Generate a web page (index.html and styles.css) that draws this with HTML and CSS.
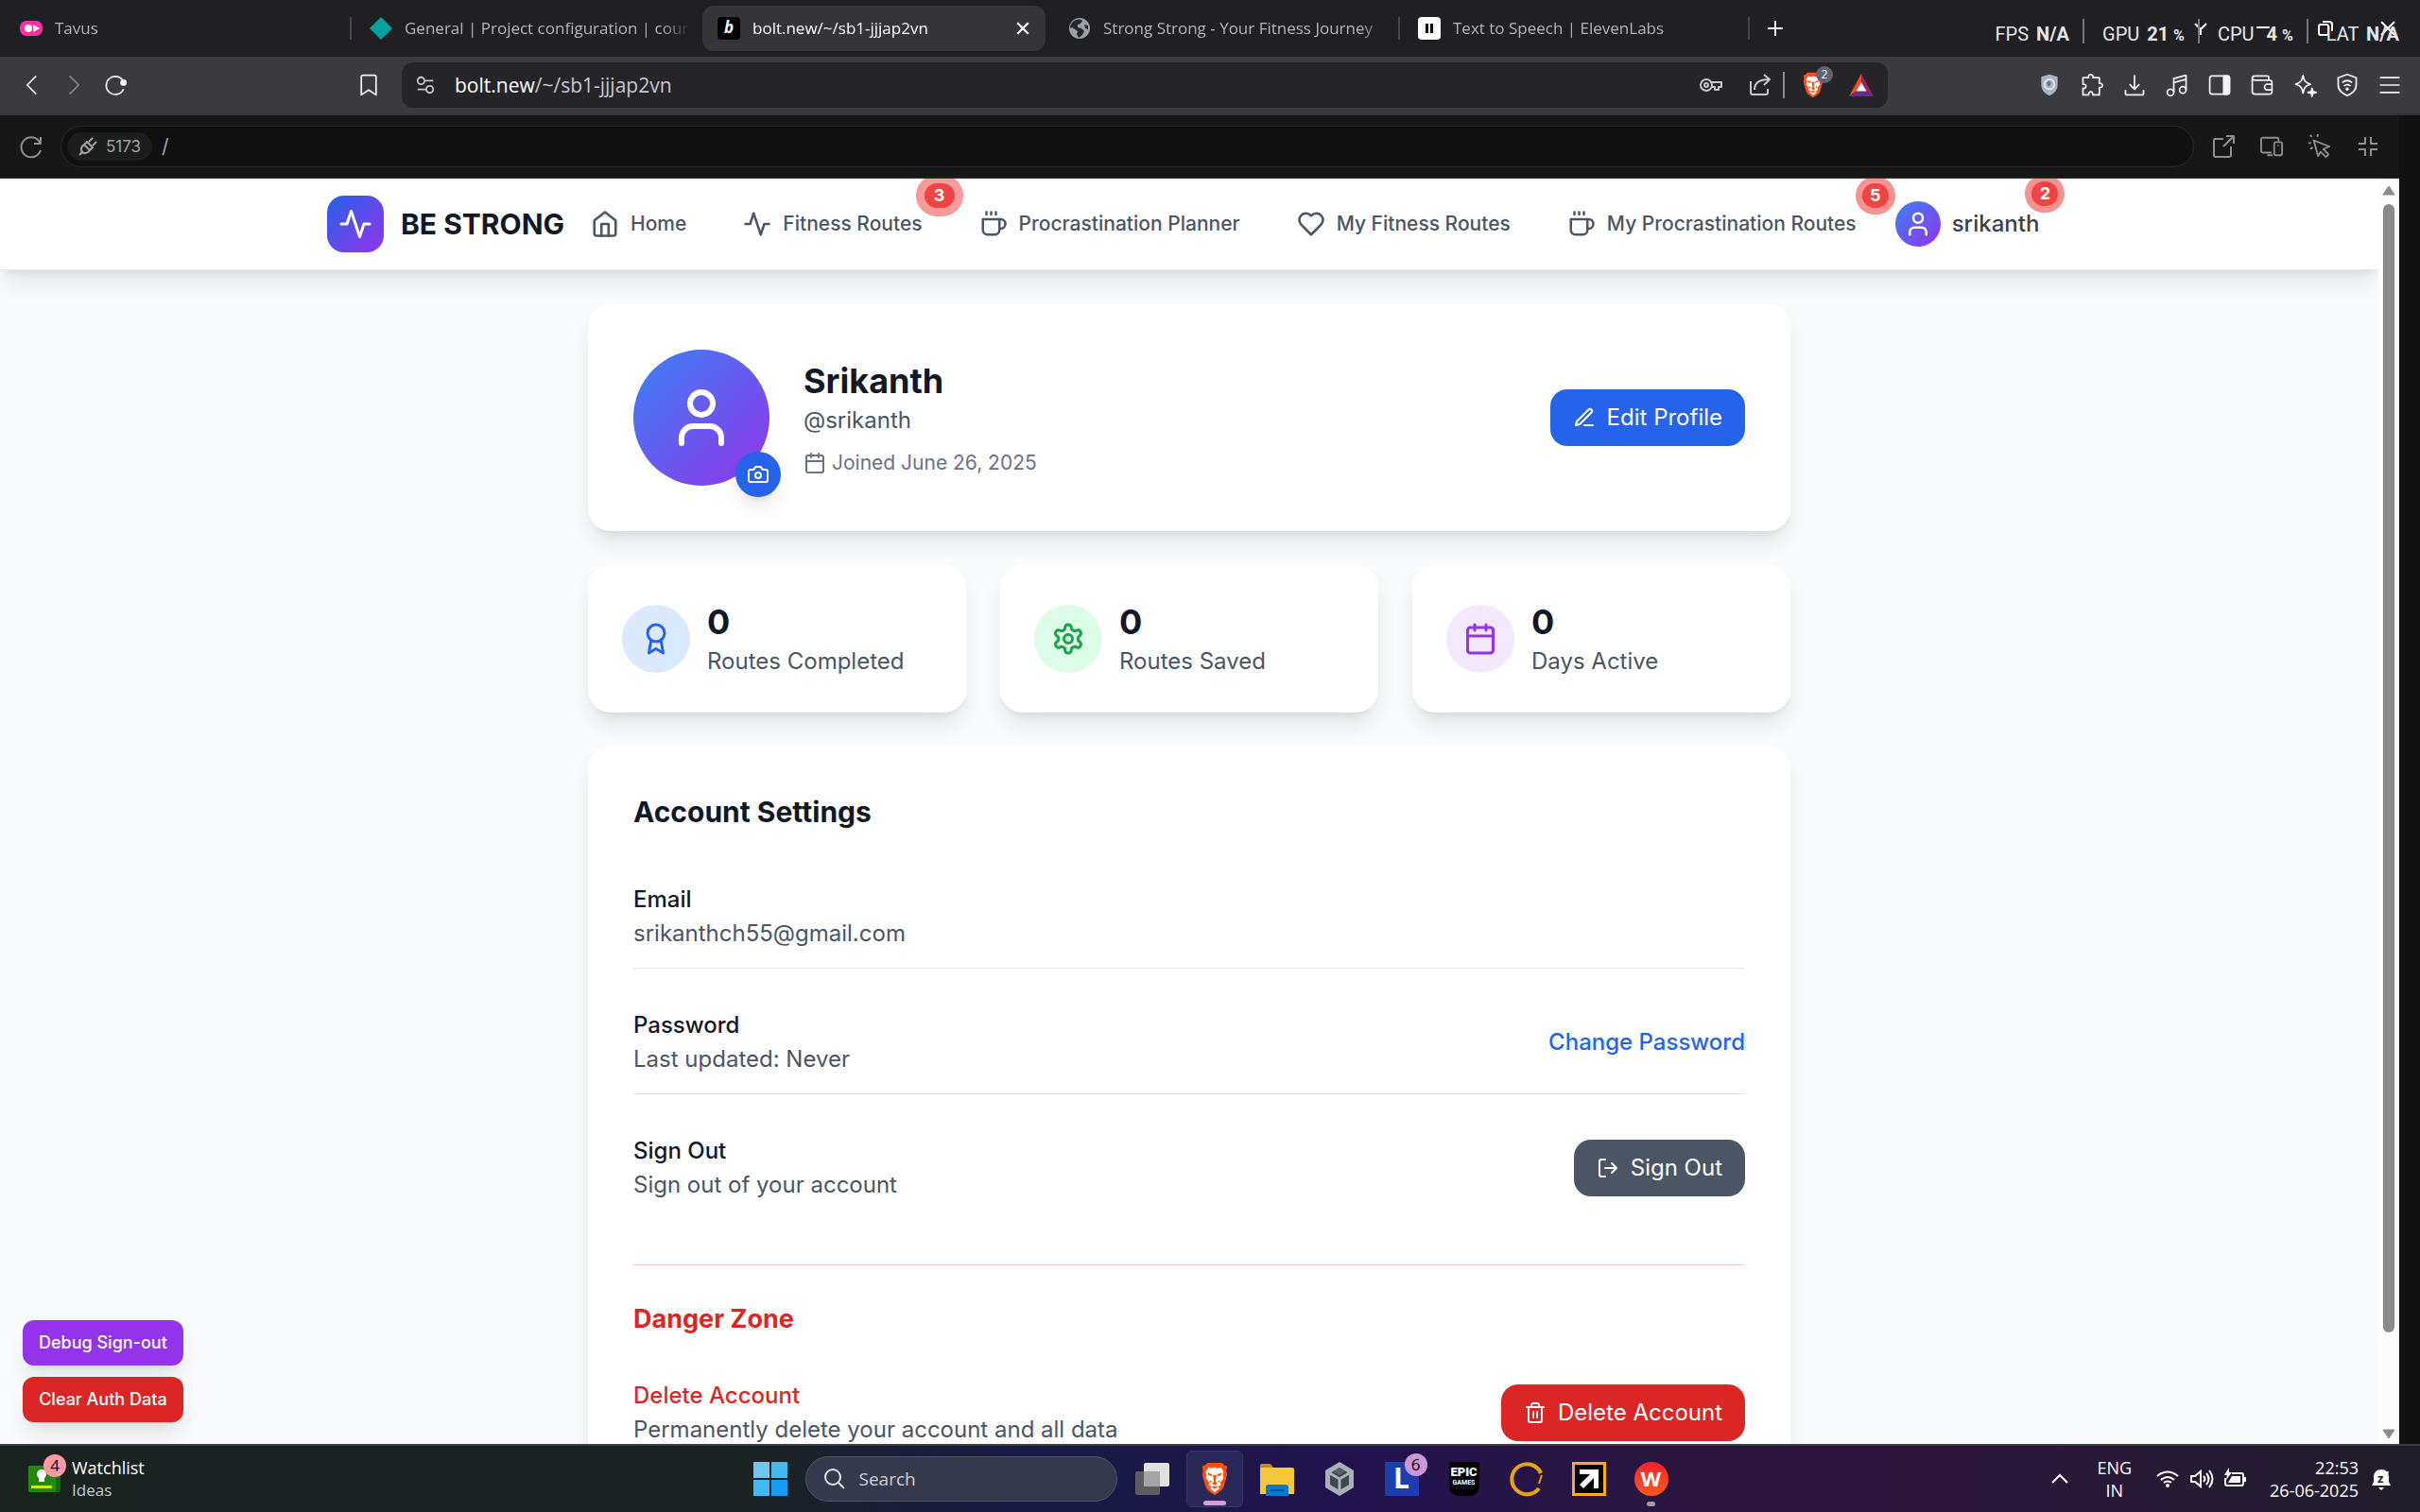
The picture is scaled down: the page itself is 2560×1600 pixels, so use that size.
FILE: index.html
```html
<!DOCTYPE html>
<html lang="en">

<head>
    <meta charset="UTF-8">
    <meta name="viewport" content="width=device-width, initial-scale=1.0">
    <title>Be Strong - Profile</title>
    <link rel="stylesheet" href="styles.css">
</head>

<body>
    <!-- shared icons -->
    <svg class="sprite" aria-hidden="true">
        <symbol id="i-home" viewBox="0 0 24 24"><path d="m3 9 9-7 9 7v11a2 2 0 0 1-2 2H5a2 2 0 0 1-2-2z"/><path d="M9 22V12h6v10"/></symbol>
        <symbol id="i-activity" viewBox="0 0 24 24"><path d="M22 12h-4l-3 9L9 3l-3 9H2"/></symbol>
        <symbol id="i-coffee" viewBox="0 0 24 24"><path d="M17 8h1a4 4 0 1 1 0 8h-1"/><path d="M3 8h14v9a4 4 0 0 1-4 4H7a4 4 0 0 1-4-4Z"/><path d="M6 2v2M10 2v2M14 2v2"/></symbol>
        <symbol id="i-heart" viewBox="0 0 24 24"><path d="M19 14c1.49-1.46 3-3.21 3-5.5A5.5 5.5 0 0 0 16.5 3c-1.76 0-3 .5-4.5 2-1.5-1.5-2.74-2-4.5-2A5.5 5.5 0 0 0 2 8.5c0 2.3 1.5 4.05 3 5.5l7 7Z"/></symbol>
        <symbol id="i-user" viewBox="0 0 24 24"><path d="M19 21v-2a4 4 0 0 0-4-4H9a4 4 0 0 0-4 4v2"/><circle cx="12" cy="7" r="4"/></symbol>
        <symbol id="i-calendar" viewBox="0 0 24 24"><rect x="3" y="4" width="18" height="18" rx="2"/><path d="M16 2v4M8 2v4M3 10h18"/></symbol>
        <symbol id="i-brave" viewBox="0 0 32 38">
            <path fill="#fb4f12" stroke="none" d="M8 1h16l3 3 3 1-1 5 1 4-4 14c-1 3-5 6-10 9-5-3-9-6-10-9L2 14l1-4-1-5 3-1z"/>
            <path fill="#fff" stroke="none" d="m9 6 4 1 3-1 3 1 4-1 3 5-1 4 1 3-4 5 1 3-3 1 1 3-5 4-5-4 1-3-3-1 1-3-4-5 1-3-1-4z"/>
            <path fill="#fb4f12" stroke="none" d="m8 12 5 2v2l-4-1zM24 12l-5 2v2l4-1zM14 14l2 1 2-1-1 8 2 2-3 2-3-2 2-2zM10 20l3 2-2 1zM22 20l-3 2 2 1zM12 28l4-1 4 1-4 2z"/>
        </symbol>
    </svg>

    <!-- browser tabs -->
    <header class="tabstrip">
        <div class="tab">
            <svg class="favicon" viewBox="0 0 24 24"><rect y="4" width="24" height="16" rx="7" fill="#fc2fa9"/><circle cx="9" cy="12" r="4" fill="#fff"/><path d="M14 8l7 4-7 4z" fill="#fff"/></svg>
            <span class="tab-title">Tavus</span>
        </div>
        <div class="tab divided">
            <svg class="favicon" viewBox="0 0 24 24"><path d="M12 0l12 12-12 12L0 12z" fill="#05a3a0"/></svg>
            <span class="tab-title">General | Project configuration | cour</span>
        </div>
        <div class="tab active">
            <span class="favicon bolt">b</span>
            <span class="tab-title">bolt.new/~/sb1-jjjap2vn</span>
            <button class="tab-close" aria-label="Close tab"><svg class="stroke" viewBox="0 0 14 14"><path d="M2 2l10 10M12 2L2 12"/></svg></button>
        </div>
        <div class="tab">
            <svg class="favicon" viewBox="0 0 24 24"><circle cx="12" cy="12" r="11" fill="#9aa0a6"/><path d="M6 4c4-2 8-2 9 0l-2 3-3 1v3l4 1 3 3-2 4-4 3-2-4 1-3-6-4-2 1c0-3 1-6 4-8zM17 8l4 1v4l-3-1z" fill="#27272b"/></svg>
            <span class="tab-title">Strong Strong - Your Fitness Journey</span>
        </div>
        <div class="tab divided">
            <svg class="favicon" viewBox="0 0 24 24"><rect width="24" height="24" rx="4" fill="#fff"/><path d="M8 7h3v10H8zM13 7h3v10h-3z" fill="#000"/></svg>
            <span class="tab-title">Text to Speech | ElevenLabs</span>
        </div>
        <button class="new-tab" aria-label="New tab"><svg class="stroke" viewBox="0 0 18 18"><path d="M9 1v16M1 9h16"/></svg></button>
        <div class="window-controls">
            <svg class="stroke" viewBox="0 0 18 18"><path d="M3 4l6 6 6-6M9 10v6"/></svg>
            <svg class="stroke" viewBox="0 0 18 18"><path d="M2 8h14"/></svg>
            <svg class="stroke" viewBox="0 0 18 18"><rect x="2" y="5" width="10" height="11" rx="2"/><path d="M6 2h7a3 3 0 0 1 3 3v7"/></svg>
            <svg class="stroke" viewBox="0 0 18 18"><path d="M2 2l14 14M16 2L2 16"/></svg>
        </div>
        <!-- performance overlay -->
        <div class="perf">
            <span class="perf-item">FPS <b>N/A</b></span>
            <span class="perf-item">GPU <b>21 <small>%</small></b></span>
            <span class="perf-item">CPU <b>&nbsp;4 <small>%</small></b></span>
            <span class="perf-item">LAT <b>N/A</b></span>
        </div>
    </header>

    <!-- address bar -->
    <div class="toolbar">
        <button class="tool" aria-label="Back"><svg class="stroke" viewBox="0 0 30 30"><path d="M20 4L9 15l11 11"/></svg></button>
        <button class="tool dim" aria-label="Forward"><svg class="stroke" viewBox="0 0 30 30"><path d="M10 4l11 11-11 11"/></svg></button>
        <button class="tool" aria-label="Reload"><svg class="stroke" viewBox="0 0 30 30"><path d="M25 20a11 11 0 1 1 0-9"/><circle cx="25" cy="12" r="3" fill="currentColor"/></svg></button>
        <button class="tool bookmark" aria-label="Bookmark"><svg class="stroke" viewBox="0 0 30 30"><path d="M6 5q0-2 2-2h14q2 0 2 2v22l-9-6-9 6z"/></svg></button>
        <div class="address">
            <svg class="stroke site" viewBox="0 0 24 24"><circle cx="7" cy="7" r="4"/><path d="M12 7h9M3 17h9"/><circle cx="17" cy="17" r="4"/></svg>
            <span class="url"><b>bolt.new</b>/~/sb1-jjjap2vn</span>
            <svg class="stroke small" viewBox="0 0 24 24"><circle cx="7" cy="12" r="6"/><circle cx="7" cy="12" r="2"/><path d="M13 9h10v5h-3v3h-4v-3h-3"/></svg>
            <svg class="stroke small share" viewBox="0 0 24 24"><path d="M2 8v12q0 2 2 2h14q2 0 2-2v-4M6 17c0-7 4-11 15-11M16 1l6 5-6 6"/></svg>
            <span class="address-brave"><svg viewBox="0 0 32 38"><use href="#i-brave"/></svg><i>2</i></span>
            <svg class="bat" viewBox="0 0 28 26"><path d="M14 0L0 26l8-6 6-10z" fill="#ff4724"/><path d="M14 0v10l6 10 8 6z" fill="#9e1f63"/><path d="M0 26h28l-8-6H8z" fill="#662d91"/><path d="M14 10l6 10H8z" fill="#fff"/></svg>
        </div>
        <div class="extensions">
            <svg viewBox="0 0 30 30"><path d="M15 2l10 3v9c0 7-4 11-10 14C9 25 5 21 5 14V5z" fill="#a9b4c6"/><circle cx="15" cy="14" r="6" fill="#a9b4c6" stroke="#e4e8ef" stroke-width="2"/><path d="M12 12q3-3 5 0l-2 5q-3-1-3-5z" fill="#66758f"/></svg>
            <svg class="stroke" viewBox="0 0 30 30"><path d="M4 6h7c-2-5 7-5 5 0h8v7c5-1 5 6 0 5v9h-8c1-5-6-5-5 0H4v-8c5 1 5-6 0-5z"/></svg>
            <svg class="stroke" viewBox="0 0 30 30"><path d="M15 3v17M9 14l6 6 6-6M4 21v4q0 2 2 2h18q2 0 2-2v-4"/></svg>
            <svg class="stroke" viewBox="0 0 30 30"><circle cx="7" cy="24" r="4"/><circle cx="22" cy="21" r="4"/><path d="M11 24V7l15-4v18M11 12l15-4"/></svg>
            <svg class="stroke" viewBox="0 0 30 30"><rect x="3" y="4" width="24" height="22" rx="3"/><path d="M20 4h5q2 0 2 2v18q0 2-2 2h-5z" fill="currentColor"/></svg>
            <svg class="stroke" viewBox="0 0 30 30"><path d="M23 9V5q0-1-2-1H6Q3 4 3 7v16q0 3 3 3h18q3 0 3-3V12q0-3-3-3H6Q3 9 3 6M27 14h-7a4 4 0 0 0 0 7h7"/></svg>
            <svg class="stroke" viewBox="0 0 30 30"><path d="M13 3c1 7 3 9 9 11-6 2-8 4-9 11-1-7-3-9-9-11 6-2 8-4 9-11z"/><path d="M24 19l1 4 4 1-4 1-1 4-1-4-4-1 4-1z" fill="currentColor"/></svg>
            <svg class="stroke" viewBox="0 0 30 30"><path d="M15 2l11 4v9c0 7-5 10-11 13C9 25 4 22 4 15V6z"/><path d="M9 12q6-5 12 0M11 16q4-3 8 0"/><circle cx="15" cy="20" r="1"/></svg>
            <svg class="stroke" viewBox="0 0 30 30"><path d="M3 6h24M3 15h24M3 24h24"/></svg>
        </div>
    </div>

    <!-- preview bar -->
    <div class="preview-bar">
        <button class="preview-tool" aria-label="Reload preview"><svg class="stroke" viewBox="0 0 24 24"><path d="M22 16A10.500 10.500 0 1 1 20 6l2 3M22 2v7h-7"/></svg></button>
        <div class="preview-url">
            <span class="port"><svg class="stroke" viewBox="0 0 20 20"><path d="M1 19l4-4M6 8l6 6-2 2c-5 3-9-1-6-6zM12 14l3-3-6-6-3 3M11 5l4-4M15 9l4-4M9 5l6 6"/></svg>5173</span>
            <span>/</span>
        </div>
        <button class="preview-tool" aria-label="Open in new tab"><svg class="stroke" viewBox="0 0 24 24"><path d="M12 4H3q-1 0-1 1v16q0 2 2 2h14q2 0 2-2v-9M15 1h8v8M23 1L12 12"/></svg></button>
        <button class="preview-tool" aria-label="Devices"><svg class="stroke" viewBox="0 0 26 24"><path d="M13 19H3q-2 0-2-2V4q0-2 2-2h16q2 0 2 2v2M8 22h6"/><rect x="16" y="7" width="9" height="15" rx="2"/><path d="M20 11h1"/></svg></button>
        <button class="preview-tool" aria-label="Select element"><svg class="stroke" viewBox="0 0 26 24"><path d="M6 5l18 7-7 3 6 6-3 3-6-6-3 5zM10 1l1-3M4 1L2-1M3 8H0M5 13l-3 2"/></svg></button>
        <button class="preview-tool" aria-label="Exit full screen"><svg class="stroke" viewBox="0 0 24 24"><path d="M9 2v7H2M15 2v7h7M9 22v-7H2M15 22v-7h7"/></svg></button>
    </div>

    <div class="viewport">
        <div class="app">
            <header class="site-header">
                <div class="site-header-inner">
                    <a class="brand" href="#">
                        <span class="brand-mark"><svg class="icon" viewBox="0 0 24 24"><use href="#i-activity"/></svg></span>
                        BE STRONG
                    </a>
                    <nav class="site-nav">
                        <a href="#"><svg class="icon"><use href="#i-home"/></svg>Home</a>
                        <a href="#"><svg class="icon"><use href="#i-activity"/></svg>Fitness Routes<span class="badge wide">3</span></a>
                        <a href="#"><svg class="icon"><use href="#i-coffee"/></svg>Procrastination Planner</a>
                        <a href="#"><svg class="icon"><use href="#i-heart"/></svg>My Fitness Routes</a>
                        <a href="#"><svg class="icon"><use href="#i-coffee"/></svg>My Procrastination Routes<span class="badge">5</span></a>
                    </nav>
                    <button class="user-menu">
                        <span class="user-avatar"><svg class="icon"><use href="#i-user"/></svg></span>
                        srikanth
                        <span class="badge">2</span>
                    </button>
                </div>
            </header>

            <main class="profile-page">
                <section class="card profile">
                    <div class="avatar">
                        <svg class="icon"><use href="#i-user"/></svg>
                        <button class="avatar-edit" aria-label="Change photo"><svg class="icon" viewBox="0 0 24 24"><path d="M14.500 4h-5L7 7H4a2 2 0 0 0-2 2v9a2 2 0 0 0 2 2h16a2 2 0 0 0 2-2V9a2 2 0 0 0-2-2h-3l-2.500-3z"/><circle cx="12" cy="13" r="3"/></svg></button>
                    </div>
                    <div class="profile-info">
                        <h1>Srikanth</h1>
                        <p>@srikanth</p>
                        <p class="joined"><svg class="icon"><use href="#i-calendar"/></svg>Joined June 26, 2025</p>
                    </div>
                    <button class="btn blue"><svg class="icon" viewBox="0 0 24 24"><path d="M12 20h9"/><path d="M16.500 3.500a2.120 2.120 0 0 1 3 3L7 19l-4 1 1-4Z"/></svg>Edit Profile</button>
                </section>

                <section class="stats">
                    <div class="card stat">
                        <span class="stat-icon award"><svg class="icon" viewBox="0 0 24 24"><circle cx="12" cy="8" r="6"/><path d="M15.477 12.890 17 22l-5-3-5 3 1.523-9.110"/></svg></span>
                        <div>
                            <strong>0</strong>
                            <p>Routes Completed</p>
                        </div>
                    </div>
                    <div class="card stat">
                        <span class="stat-icon saved"><svg class="icon" viewBox="0 0 24 24"><path d="M12.220 2h-.44a2 2 0 0 0-2 2v.18a2 2 0 0 1-1 1.730l-.43.25a2 2 0 0 1-2 0l-.15-.08a2 2 0 0 0-2.730.73l-.22.38a2 2 0 0 0 .73 2.730l.15.1a2 2 0 0 1 1 1.720v.51a2 2 0 0 1-1 1.740l-.15.09a2 2 0 0 0-.73 2.730l.22.38a2 2 0 0 0 2.730.73l.15-.08a2 2 0 0 1 2 0l.43.25a2 2 0 0 1 1 1.730V20a2 2 0 0 0 2 2h.44a2 2 0 0 0 2-2v-.18a2 2 0 0 1 1-1.730l.43-.25a2 2 0 0 1 2 0l.15.08a2 2 0 0 0 2.730-.73l.22-.39a2 2 0 0 0-.73-2.730l-.15-.08a2 2 0 0 1-1-1.740v-.5a2 2 0 0 1 1-1.740l.15-.09a2 2 0 0 0 .73-2.730l-.22-.38a2 2 0 0 0-2.730-.73l-.15.08a2 2 0 0 1-2 0l-.43-.25a2 2 0 0 1-1-1.730V4a2 2 0 0 0-2-2z"/><circle cx="12" cy="12" r="3"/></svg></span>
                        <div>
                            <strong>0</strong>
                            <p>Routes Saved</p>
                        </div>
                    </div>
                    <div class="card stat">
                        <span class="stat-icon days"><svg class="icon"><use href="#i-calendar"/></svg></span>
                        <div>
                            <strong>0</strong>
                            <p>Days Active</p>
                        </div>
                    </div>
                </section>

                <section class="card settings">
                    <h2>Account Settings</h2>
                    <div class="setting">
                        <div>
                            <h3>Email</h3>
                            <p>srikanthch55@gmail.com</p>
                        </div>
                    </div>
                    <div class="setting">
                        <div>
                            <h3>Password</h3>
                            <p>Last updated: Never</p>
                        </div>
                        <a class="change-link" href="#">Change Password</a>
                    </div>
                    <div class="setting last">
                        <div>
                            <h3>Sign Out</h3>
                            <p>Sign out of your account</p>
                        </div>
                        <button class="btn gray"><svg class="icon" viewBox="0 0 24 24"><path d="M9 21H5a2 2 0 0 1-2-2V5a2 2 0 0 1 2-2h4"/><path d="m16 17 5-5-5-5M21 12H9"/></svg>Sign Out</button>
                    </div>
                    <div class="danger">
                        <h2>Danger Zone</h2>
                        <div class="setting last">
                            <div>
                                <h3>Delete Account</h3>
                                <p>Permanently delete your account and all data</p>
                            </div>
                            <button class="btn red"><svg class="icon" viewBox="0 0 24 24"><path d="M3 6h18M19 6v14c0 1-1 2-2 2H7c-1 0-2-1-2-2V6M8 6V4c0-1 1-2 2-2h4c1 0 2 1 2 2v2M10 11v6M14 11v6"/></svg>Delete Account</button>
                        </div>
                    </div>
                </section>
            </main>

            <div class="debug">
                <button class="purple">Debug Sign-out</button>
                <button class="red">Clear Auth Data</button>
            </div>
        </div>
        <div class="scrollbar">
            <svg viewBox="0 0 16 12"><path d="M8 1l6 9H2z"/></svg>
            <span class="thumb"></span>
            <svg viewBox="0 0 16 12"><path d="M8 11l6-9H2z"/></svg>
        </div>
    </div>

    <footer class="taskbar">
        <div class="widget">
            <span class="widget-icon">
                <svg viewBox="0 0 34 28"><rect width="34" height="28" rx="2" fill="#0d6b12"/><rect width="29" height="28" rx="2" fill="#22890f"/><circle cx="14" cy="9" r="5" fill="#fff"/><path d="M11 12h6v5h-6z" fill="#fff"/><path d="M3 21h22v3H3z" fill="#c8ee00"/></svg>
                <i>4</i>
            </span>
            <div>Watchlist<small>Ideas</small></div>
        </div>

        <div class="dock">
            <svg class="start" viewBox="0 0 36 36"><path d="M0 1q0-1 1-1h16v17H0z" fill="#6bc9ee"/><path d="M19 0h16q1 0 1 1v16H19z" fill="#45baf1"/><path d="M0 19h17v17H1q-1 0-1-1z" fill="#3cbbf5"/><path d="M19 19h17v16q0 1-1 1H19z" fill="#159cf5"/></svg>
            <div class="search">
                <svg viewBox="0 0 24 24"><circle cx="10" cy="10" r="8"/><path d="M16 16l6 6"/></svg>
                <input type="text" placeholder="Search" aria-label="Search">
            </div>
            <div class="dock-app"><svg viewBox="0 0 36 36"><rect y="10" width="26" height="25" rx="2" fill="#5c5c5e"/><rect x="9" y="1" width="27" height="25" rx="2" fill="#e2e2e2"/><path d="M9 10h17v16H9z" fill="#a5a5a7"/></svg></div>
            <div class="dock-app open"><svg viewBox="0 0 32 38"><use href="#i-brave"/></svg></div>
            <div class="dock-app"><svg viewBox="0 0 36 36"><path d="M0 4q0-2 2-2h9l3 4H0z" fill="#c98b08"/><path d="M0 6h34q2 0 2 2v26H0z" fill="#f5c73c"/><path d="M6 36V27q0-3 3-3h18q3 0 3 3v9z" fill="#0b77cf"/><path d="M11 29h14v2H11z" fill="#064f91"/></svg></div>
            <div class="dock-app"><svg viewBox="0 0 36 36"><path d="M18 0l15 9v18l-15 9-15-9V9z" fill="#a9b0b7"/><path d="M18 6l10 6v12l-10 6-10-6V12z" fill="#3e4650"/><path d="M18 6l6 4-6 4-6-4z" fill="#59626d"/><path d="M8 12l10 6 10-6M18 18v12" fill="none" stroke="#a9b0b7" stroke-width="3"/></svg></div>
            <div class="dock-app"><span class="l-app">L</span><i>6</i></div>
            <div class="dock-app"><span class="epic"><b>EPIC</b>GAMES</span></div>
            <div class="dock-app"><svg viewBox="0 0 36 36"><path d="M33 12A16 16 0 1 0 31 28" fill="none" stroke="#e8a500" stroke-width="4"/><path d="M34 14l-3 9" stroke="#e8a500" stroke-width="2"/></svg></div>
            <div class="dock-app"><svg viewBox="0 0 36 36"><rect width="36" height="36" fill="#fca820"/><rect x="3" y="3" width="30" height="30" fill="#000"/><path d="M8 8h20v20h-5V17L12 28l-4-4 11-11H8z" fill="#fff"/></svg></div>
            <div class="dock-app running"><span class="wps">W</span></div>
        </div>

        <div class="tray">
            <svg class="chevron" viewBox="0 0 18 12"><path d="M1 10l8-8 8 8"/></svg>
            <div class="lang">ENG<br>IN</div>
            <svg viewBox="0 0 24 24"><path d="M1 9q11-9 22 0M5 13q7-6 14 0M8 16q4-3 8 0"/><circle cx="12" cy="19" r="1" fill="#fff"/></svg>
            <svg viewBox="0 0 24 24"><path d="M1 9h4l6-5v16l-6-5H1zM14 9q3 3 0 6M17 6q5 6 0 12M20 3q7 9 0 18"/></svg>
            <svg viewBox="0 0 24 24"><path d="M8 6h10q2 0 2 2v9q0 2-2 2H3q-2 0-2-2v-6"/><path d="M8 9h9v7H4zM21 10h2v5h-2zM5 0L0 8h3l-1 5 6-8H5z" fill="#fff" stroke="none"/></svg>
            <div class="clock">22:53<br>26-06-2025</div>
            <span class="bell"><svg viewBox="0 0 24 24"><path d="M2 19l2-4V9q1-7 8-7t8 7v6l2 4zM9 21h6l-3 3z" fill="#fff" stroke="none"/></svg><b>z<sup>z</sup></b></span>
        </div>
    </footer>
</body>

</html>
```
FILE: styles.css
```css
* {
    box-sizing: border-box;
}

body {
    margin: 0;
    height: 100vh;
    display: flex;
    flex-direction: column;
    overflow: hidden;
    background: #111;
    font-family: Inter, "Liberation Sans", sans-serif;
    font-size: 24px;
    line-height: 36px;
}

h1,
h2,
h3,
p {
    margin: 0;
}

button {
    padding: 0;
    border: 0;
    background: none;
    color: inherit;
    font: inherit;
    cursor: pointer;
}

a {
    color: inherit;
    text-decoration: none;
}

svg {
    flex: none;
    overflow: visible;
}

i {
    font-style: normal;
}

.sprite {
    display: none;
}

.icon {
    width: 24px;
    height: 24px;
    fill: none;
    stroke: currentColor;
    stroke-width: 2;
    stroke-linecap: round;
    stroke-linejoin: round;
}

.stroke {
    fill: none;
    stroke: currentColor;
    stroke-width: 2;
    stroke-linejoin: round;
}

/* Browser tabs */

.tabstrip {
    position: relative;
    display: flex;
    align-items: center;
    height: 60px;
    flex: none;
    background: #201f24;
    color: #b5b4b8;
    font: 17px/24px "Open Sans", sans-serif;
}

.tab {
    display: flex;
    align-items: center;
    gap: 13px;
    flex: 0 1 370px;
    min-width: 0;
    height: 48px;
    padding: 0 10px 0 21px;
    border-radius: 12px;
}

.tab.divided {
    border-radius: 0;
    background: linear-gradient(#47464b, #47464b) left center / 2px 24px no-repeat;
}

.tab.active {
    flex-basis: 363px;
    margin: 0 3px;
    padding: 0 16px;
    background: #353438;
    color: #fff;
}

.favicon {
    width: 24px;
    height: 24px;
    flex: none;
}

.bolt {
    border-radius: 4px;
    background: #000;
    color: #fff;
    font-weight: 700;
    font-style: italic;
    text-align: center;
    line-height: 22px;
}

.tab-title {
    flex: 1;
    overflow: hidden;
    white-space: nowrap;
    -webkit-mask-image: linear-gradient(90deg, #000 90%, transparent);
    mask-image: linear-gradient(90deg, #000 90%, transparent);
}

.tab-close,
.tab-close svg {
    width: 16px;
    height: 16px;
    display: block;
}

.new-tab {
    width: 56px;
    height: 24px;
    border-left: 2px solid #47464b;
    color: #fff;
}

.new-tab svg {
    width: 18px;
    height: 18px;
    display: block;
    margin: auto;
}

.window-controls {
    display: flex;
    gap: 48px;
    margin-left: auto;
    padding-right: 25px;
    color: #fff;
}

.window-controls svg {
    width: 18px;
    height: 18px;
}

/* floats over the tab strip */
.perf {
    position: absolute;
    top: 20px;
    right: 22px;
    display: flex;
    color: #e6e6e6;
    font: 20px/32px Roboto, sans-serif;
    white-space: nowrap;
}

.perf-item + .perf-item {
    margin-left: 14px;
    padding-left: 19px;
    border-left: 2px solid #77767b;
    height: 26px;
}

.perf b {
    margin-left: 3px;
}

.perf small {
    font-size: 16px;
}

/* Address bar */

.toolbar {
    display: flex;
    align-items: center;
    height: 62px;
    flex: none;
    padding: 0 17px 0 21px;
    border-bottom: 2px solid #323135;
    background: #3b3a3f;
    color: #f2f2f4;
}

.tool {
    width: 44px;
    height: 26px;
    text-align: left;
}

.tool svg {
    width: 26px;
    height: 26px;
    display: block;
}

.dim {
    color: #858488;
}

.bookmark {
    margin-left: 224px;
    margin-right: 4px;
}

.address {
    display: flex;
    align-items: center;
    flex: 1;
    height: 48px;
    padding: 0 14px;
    border-radius: 12px;
    background: #252429;
    color: #c8c8ca;
    font: 21px/28px "Open Sans", sans-serif;
    max-width: 1572px;
}

.site {
    width: 22px;
    height: 22px;
    margin-right: 20px;
}

.url {
    flex: 1;
}

.url b {
    font-weight: 400;
    color: #fff;
}

.small {
    width: 24px;
    height: 24px;
    margin-right: 28px;
}

.share {
    margin-right: 12px;
}

.address-brave {
    position: relative;
    display: flex;
    padding-left: 18px;
    border-left: 2px solid #8c8b90;
    margin-right: 25px;
}

.address-brave svg {
    width: 24px;
    height: 28px;
}

.address-brave i {
    position: absolute;
    right: -9px;
    top: -6px;
    width: 18px;
    height: 18px;
    border-radius: 9px;
    background: #5e6474;
    color: #fff;
    font-size: 12px;
    line-height: 18px;
    text-align: center;
}

.bat {
    width: 28px;
    height: 24px;
}

.extensions {
    display: flex;
    gap: 19px;
    margin-left: auto;
    padding-right: 2px;
}

.extensions svg {
    width: 26px;
    height: 26px;
}

/* Preview bar */

.preview-bar {
    display: flex;
    align-items: center;
    gap: 27px;
    height: 67px;
    flex: none;
    margin-right: 22px;
    padding: 0 21px;
    border-bottom: 1px solid #333;
    background: #171717;
    color: #8f8f8f;
}

.preview-tool,
.preview-tool svg {
    width: 24px;
    height: 24px;
    display: block;
}

.preview-url {
    display: flex;
    align-items: center;
    gap: 10px;
    flex: 1;
    height: 44px;
    margin-left: -8px;
    margin-right: -8px;
    padding: 0 6px;
    border: 1px solid #292929;
    border-radius: 22px;
    background: #101010;
    color: #a3a3a3;
    font-size: 21px;
}

.port {
    display: flex;
    align-items: center;
    gap: 9px;
    height: 30px;
    padding: 0 12px;
    border-radius: 15px;
    background: #1d1d1d;
    font-size: 17px;
}

.port svg {
    width: 20px;
    height: 20px;
}

/* App */

.viewport {
    display: flex;
    flex: 1;
    min-height: 0;
    padding-right: 22px;
    overflow: hidden;
}

.app {
    position: relative;
    flex: 1;
    overflow: hidden;
    background: #f9fafb;
    color: #111827;
}

.site-header {
    position: relative;
    z-index: 1;
    border-bottom: 1px solid #e5e7eb;
    background: #fff;
    box-shadow: 0 15px 23px -5px rgba(0, 0, 0, 0.1), 0 6px 9px -6px rgba(0, 0, 0, 0.1);
}

.site-header-inner {
    display: flex;
    align-items: center;
    height: 96px;
    max-width: 1920px;
    margin: 0 auto;
    padding: 0 48px;
}

.brand {
    display: flex;
    align-items: center;
    gap: 18px;
    font-size: 30px;
    font-weight: 700;
    white-space: nowrap;
}

.brand-mark {
    display: flex;
    align-items: center;
    justify-content: center;
    width: 60px;
    height: 60px;
    border-radius: 18px;
    background: linear-gradient(135deg, #2563eb, #9333ea);
    color: #fff;
}

.brand-mark .icon {
    width: 36px;
    height: 36px;
}

.site-nav {
    display: flex;
    gap: 24px;
    margin-left: 10px;
}

.site-nav a {
    position: relative;
    display: flex;
    align-items: center;
    gap: 12px;
    padding: 12px 18px;
    color: #4b5563;
    font-size: 21px;
    font-weight: 500;
    line-height: 30px;
    white-space: nowrap;
}

.site-nav .icon,
.user-menu .icon {
    width: 30px;
    height: 30px;
}

.badge {
    position: absolute;
    top: -16px;
    right: -16px;
    width: 28px;
    height: 26px;
    border-radius: 14px;
    background: #ef4444;
    box-shadow: 0 0 0 7px #f69292;
    color: #fff;
    font-size: 18px;
    font-weight: 700;
    line-height: 26px;
    text-align: center;
}

.badge.wide {
    width: 32px;
    box-shadow: 0 0 0 9px #f79a9a;
}

.user-menu {
    position: relative;
    display: flex;
    align-items: center;
    gap: 12px;
    margin-left: 23px;
    padding-right: 4px;
    color: #374151;
    font-weight: 500;
}

.user-menu .badge {
    top: -21px;
}

.user-avatar {
    display: flex;
    align-items: center;
    justify-content: center;
    width: 48px;
    height: 48px;
    border-radius: 50%;
    background: linear-gradient(135deg, #3b82f6, #9333ea);
    color: #fff;
}

.profile-page {
    display: flex;
    flex-direction: column;
    gap: 36px;
    max-width: 1344px;
    margin: 0 auto;
    padding: 36px;
}

.card {
    border-radius: 24px;
    background: #fff;
    box-shadow: 0 15px 23px -5px rgba(0, 0, 0, 0.1), 0 6px 9px -6px rgba(0, 0, 0, 0.1);
}

.card p {
    color: #4b5563;
}

.profile {
    display: flex;
    align-items: center;
    gap: 36px;
    padding: 48px;
}

.avatar {
    position: relative;
    display: flex;
    align-items: center;
    justify-content: center;
    width: 144px;
    height: 144px;
    border-radius: 50%;
    background: linear-gradient(135deg, #3b82f6, #9333ea);
    color: #fff;
}

.avatar > .icon {
    width: 72px;
    height: 72px;
}

.avatar-edit {
    position: absolute;
    right: -12px;
    bottom: -12px;
    display: flex;
    align-items: center;
    justify-content: center;
    width: 48px;
    height: 48px;
    border-radius: 50%;
    background: #2563eb;
    box-shadow: 0 15px 23px -5px rgba(0, 0, 0, 0.1), 0 6px 9px -6px rgba(0, 0, 0, 0.1);
}

.profile-info {
    flex: 1;
}

.profile-info h1 {
    font-size: 36px;
    line-height: 48px;
}

.card .joined {
    display: flex;
    align-items: center;
    gap: 6px;
    margin-top: 12px;
    color: #6b7280;
    font-size: 21px;
    line-height: 30px;
}

.btn {
    display: flex;
    align-items: center;
    gap: 12px;
    height: 60px;
    padding: 0 24px;
    border-radius: 18px;
    color: #fff;
}

.blue {
    background: #2563eb;
}

.gray {
    background: #4b5563;
}

.red {
    background: #dc2626;
}

.purple {
    background: #9333ea;
}

.stats {
    display: grid;
    grid-template-columns: repeat(3, 1fr);
    gap: 36px;
}

.stat {
    display: flex;
    align-items: center;
    gap: 18px;
    padding: 36px;
}

.stat strong {
    display: block;
    font-size: 36px;
    line-height: 48px;
}

.stat-icon {
    display: flex;
    align-items: center;
    justify-content: center;
    width: 72px;
    height: 72px;
    border-radius: 50%;
}

.stat-icon .icon {
    width: 36px;
    height: 36px;
}

.award {
    background: #dbeafe;
    color: #2563eb;
}

.saved {
    background: #dcfce7;
    color: #16a34a;
}

.days {
    background: #f3e8ff;
    color: #9333ea;
}

.settings {
    padding: 48px;
}

.settings h2 {
    margin-bottom: 36px;
    font-size: 30px;
    line-height: 42px;
}

.setting {
    display: flex;
    align-items: center;
    justify-content: space-between;
    margin-bottom: 24px;
    padding: 18px 0;
    border-bottom: 1px solid #e5e7eb;
}

.setting.last {
    margin-bottom: 0;
    border-bottom: 0;
}

.setting h3 {
    font-size: 24px;
    font-weight: 500;
}

.change-link {
    color: #2563eb;
    font-weight: 500;
}

.danger {
    margin-top: 48px;
    padding-top: 36px;
    border-top: 1px solid #fecaca;
}

.danger h2,
.danger h3 {
    color: #dc2626;
}

.danger h2 {
    margin-bottom: 24px;
    font-size: 27px;
}

/* stays over the page in the corner */
.debug {
    position: absolute;
    left: 24px;
    bottom: 23px;
    display: flex;
    flex-direction: column;
    gap: 12px;
}

.debug button {
    height: 48px;
    padding: 0 17px;
    border-radius: 12px;
    box-shadow: 0 15px 23px -5px rgba(0, 0, 0, 0.1), 0 6px 9px -6px rgba(0, 0, 0, 0.1);
    color: #fff;
    font-size: 18px;
    font-weight: 500;
}

.scrollbar {
    display: flex;
    flex-direction: column;
    align-items: center;
    width: 22px;
    padding: 7px 0 5px;
    background: #fcfcfc;
}

.scrollbar svg {
    width: 16px;
    height: 12px;
    fill: #8b8b8b;
    stroke: #8b8b8b;
    stroke-linejoin: round;
}

.thumb {
    width: 12px;
    height: 90%;
    margin: 8px 0 auto;
    border-radius: 6px;
    background: #8b8b8b;
}

/* Taskbar */

.taskbar {
    display: grid;
    grid-template-columns: 1fr auto 1fr;
    align-items: center;
    height: 72px;
    flex: none;
    border-top: 2px solid #3a3941;
    background: linear-gradient(90deg, #1b2321 0%, #1b2324 31%, #171b45 42%, #22134f 56%, #2a163e 70%, #2a1838 84%, #201e2a 100%);
    color: #fff;
    font: 18px/24px "Open Sans", sans-serif;
}

.widget {
    display: flex;
    align-items: center;
    gap: 12px;
    padding-left: 30px;
}

.widget-icon {
    position: relative;
}

.widget-icon svg {
    display: block;
    width: 34px;
    height: 28px;
}

.widget-icon i,
.dock-app i {
    position: absolute;
    right: -6px;
    top: -12px;
    width: 24px;
    height: 24px;
    border-radius: 12px;
    background: #ff99a4;
    color: #000;
    font-size: 17px;
    text-align: center;
}

.widget small {
    display: block;
    color: #c5c7c8;
    font-size: 17px;
}

.dock {
    display: flex;
    align-items: center;
    gap: 6px;
    padding-left: 13px;
}

.start {
    width: 36px;
    height: 36px;
    margin-right: 13px;
}

.search {
    display: flex;
    align-items: center;
    gap: 14px;
    width: 330px;
    height: 48px;
    margin-right: 1px;
    padding: 0 18px;
    border: 1px solid #4d5365;
    border-radius: 24px;
    background: #343a4c;
}

.search svg {
    width: 24px;
    height: 24px;
    fill: none;
    stroke: #e5e5e5;
    stroke-width: 2;
}

.search input {
    width: 200px;
    padding: 0;
    border: 0;
    outline: 0;
    background: none;
    color: #fff;
    font: 19px/24px "Open Sans", sans-serif;
}

.search input::placeholder {
    color: #cfd1d6;
}

.dock-app {
    position: relative;
    display: flex;
    align-items: center;
    justify-content: center;
    width: 60px;
    height: 60px;
    border-radius: 6px;
}

.dock-app svg {
    width: 36px;
    height: 36px;
}

.dock-app i {
    top: 3px;
    right: 3px;
    background: #cf96dc;
}

.open {
    border: 1px solid #3a3566;
    background: #2a2759;
}

.open::after,
.running::after {
    content: "";
    position: absolute;
    bottom: 1px;
    width: 24px;
    height: 5px;
    border-radius: 3px;
    background: #d79be4;
}

.running::after {
    width: 9px;
    background: #a09aa9;
}

.l-app {
    width: 36px;
    height: 36px;
    background: #1d3fae;
    font-size: 30px;
    font-weight: 700;
    line-height: 34px;
    text-align: center;
}

.epic {
    width: 32px;
    height: 36px;
    padding-top: 4px;
    border-radius: 3px 3px 10px 10px;
    background: #000;
    font: 700 7px/8px Roboto, sans-serif;
    text-align: center;
}

.epic b {
    display: block;
    font-size: 13px;
    line-height: 14px;
}

.wps {
    width: 36px;
    height: 36px;
    border-radius: 50%;
    background: linear-gradient(#f5222d, #ff5a1f);
    font-size: 22px;
    font-weight: 700;
    line-height: 34px;
    text-align: center;
}

.tray {
    display: flex;
    align-items: center;
    justify-content: flex-end;
    gap: 12px;
    padding-right: 29px;
}

.tray svg {
    width: 24px;
    height: 24px;
    fill: none;
    stroke: #fff;
    stroke-width: 2;
}

.tray .chevron {
    width: 18px;
    height: 12px;
    margin-right: 18px;
}

.lang {
    margin-right: 14px;
    text-align: center;
}

.clock {
    margin-left: 12px;
    text-align: right;
}

.bell {
    position: relative;
    height: 24px;
}

.bell b {
    position: absolute;
    left: 8px;
    top: -1px;
    color: #201e2a;
    font-size: 13px;
}

.bell sup {
    color: #fff;
    font-size: 12px;
    line-height: 0;
}
```
